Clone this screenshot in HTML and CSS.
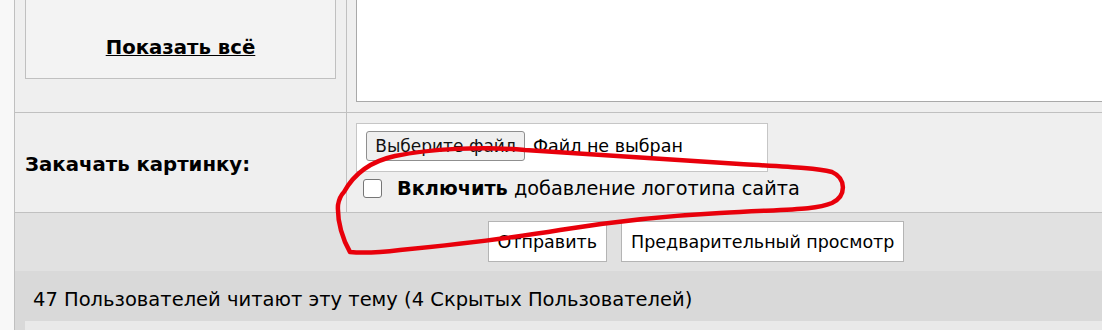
FILE: index.html
```html
<!DOCTYPE html>
<html lang="ru">
<head>
  <meta charset="UTF-8" />
  <title>Ответ в тему</title>
  <link rel="stylesheet" href="styles.css">
</head>
<body>

<div class="page">

  <!-- Смайлы и текст сообщения -->
  <div class="row row-post">
    <div class="cell cell-left">
      <div class="smiles-box">
        <a href="#" class="show-all">Показать всё</a>
      </div>
    </div>
    <div class="cell cell-right">
      <textarea class="post-text"></textarea>
    </div>
  </div>

  <!-- Загрузка картинки -->
  <div class="row row-upload">
    <div class="cell cell-left cell-label">
      <b>Закачать картинку:</b>
    </div>
    <div class="cell cell-right">
      <div class="file-box">
        <span class="file-btn">Выберите файл</span>
        <span class="file-name">Файл не выбран</span>
      </div>
      <label class="logo-check">
        <span class="check"></span>
        <span><b>Включить</b> добавление логотипа сайта</span>
      </label>
    </div>
  </div>

  <!-- Кнопки -->
  <div class="row-buttons">
    <button class="btn">Отправить</button>
    <button class="btn">Предварительный просмотр</button>
  </div>

  <!-- Кто читает -->
  <div class="readers">
    <div class="readers-title">47 Пользователей читают эту тему (4 Скрытых Пользователей)</div>
    <div class="readers-list"></div>
  </div>

</div>

<!-- Пометка красным -->
<svg class="scribble" width="1102" height="330" viewBox="0 0 1102 330">
  <path d="M344 192 C 355 172, 372 161, 395 156 C 430 149, 480 146, 525 150 C 580 154, 650 158, 740 164 C 790 167, 815 168, 832 172 C 846 178, 847 196, 832 203 C 815 210, 790 209, 720 213 C 660 216, 610 222, 560 230 C 500 240, 440 246, 400 250 C 375 253, 360 253, 350 252 C 343 240, 337 222, 338 205 C 339 199, 341 195, 344 192" fill="none" stroke="#e8000b" stroke-width="4.5" stroke-linecap="round" stroke-linejoin="round"/>
</svg>

</body>
</html>
```

FILE: styles.css
```css
/* Форма ответа */
body {
  margin: 0;
  background: #f8f8f8;
  font-family: 'DejaVu Sans', Verdana, sans-serif;
  color: #000;
  overflow: hidden;
  height: 330px;
}

.page {
  width: 1362px;
  margin-left: 14px;
  margin-top: -60px;
  border-left: 1px solid #c0c0c0;
  background: #efefef;
}

.row {
  display: grid;
  grid-template-columns: 332px 1fr;
  border-bottom: 1px solid #c0c0c0;
}

.cell-left {
  border-right: 1px solid #c0c0c0;
}

/* Первая строка */
.row-post .cell-left {
  padding: 60px 10px 33px 10px;
}

.smiles-box {
  height: 79px;
  box-sizing: border-box;
  background: #f3f3f3;
  border: 1px solid #c0c0c0;
  border-top: none;
  display: flex;
  justify-content: center;
  align-items: flex-end;
  padding-bottom: 19px;
}

.show-all {
  color: #000;
  font-weight: bold;
  font-size: 19.7px;
}

.row-post .cell-right {
  padding: 60px 9px 10px 9px;
}

.post-text {
  display: block;
  width: 100%;
  height: 102px;
  margin: 0;
  border: 1px solid #a9a9a9;
  border-top: none;
  background: #fff;
  resize: none;
  box-sizing: border-box;
}

/* Вторая строка */
.row-upload {
  height: 99px;
}

.cell-label {
  display: flex;
  align-items: center;
  padding-left: 10px;
  padding-top: 4px;
  font-size: 19.7px;
}

.row-upload .cell-right {
  padding: 10px 9px 0 9px;
}

.file-box {
  width: 392px;
  height: 47px;
  background: #fff;
  border: 1px solid #c6c6c6;
  display: flex;
  align-items: center;
  padding: 0 9px;
  font-size: 17.5px;
}

.file-btn {
  height: 28px;
  width: 157px;
  flex-shrink: 0;
  border: 1px solid #8f8f8f;
  border-radius: 3px;
  background: #efefef;
  display: flex;
  align-items: center;
  justify-content: center;
  margin-top: -3px;
  color: #111;
  font-size: 17px;
}

.file-name {
  margin-left: 8px;
  margin-top: -3px;
  white-space: nowrap;
}

.logo-check {
  display: flex;
  align-items: center;
  margin-top: 5px;
  margin-left: 7px;
  font-size: 19.3px;
}

.check {
  width: 17px;
  height: 17px;
  border: 1px solid #767676;
  border-radius: 3px;
  background: #fff;
  margin-right: 15px;
}

/* Кнопки */
.row-buttons {
  display: flex;
  justify-content: center;
  gap: 14px;
  background: #e1e1e1;
  padding: 8px 0 9px 0;
}

.btn {
  height: 41px;
  background: #fff;
  border: 1px solid #b4b4b4;
  padding: 0 9px;
  font-family: 'DejaVu Sans', Verdana, sans-serif;
  font-size: 17.5px;
  color: #000;
}

/* Читающие тему */
.readers {
  background: #d9d9d9;
}

.readers-title {
  height: 50px;
  display: flex;
  align-items: center;
  padding-left: 18px;
  padding-top: 6px;
  box-sizing: border-box;
  font-size: 19.5px;
  white-space: nowrap;
}

.readers-list {
  margin-left: 10px;
  height: 40px;
  background: #e9e9e9;
}

.scribble {
  position: absolute;
  top: 0;
  left: 0;
  pointer-events: none;
}
```
